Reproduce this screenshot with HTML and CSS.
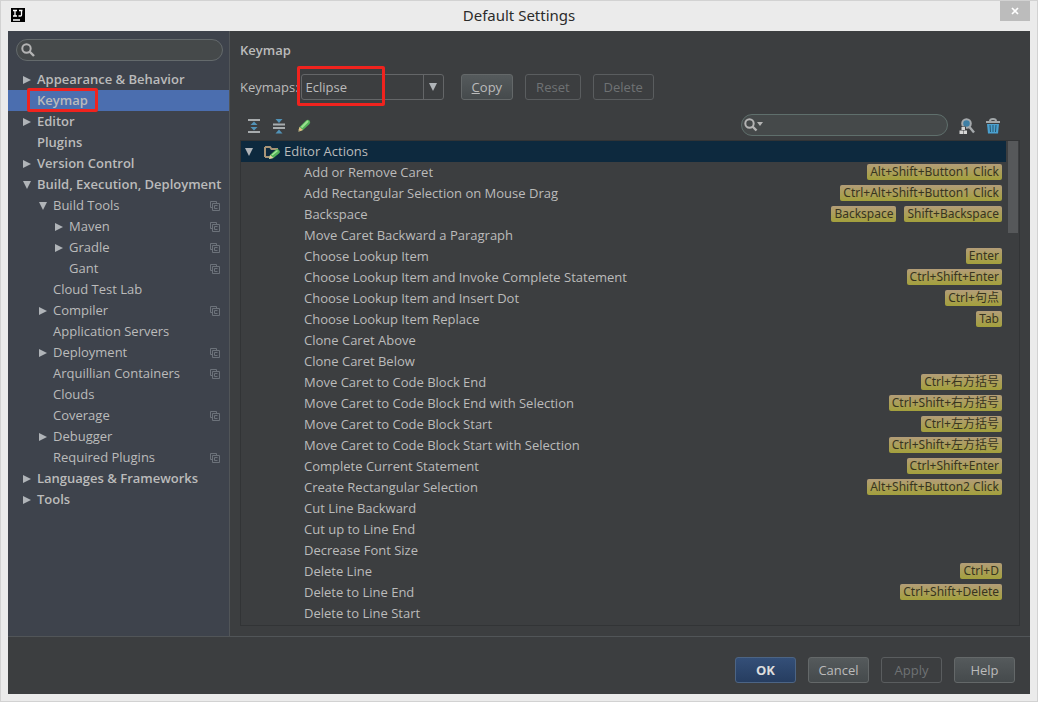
FILE: index.html
```html
<!DOCTYPE html>
<html lang="en">
<head>
  <meta charset="utf-8">
  <title>Default Settings</title>
  <link rel="stylesheet" href="styles.css">
</head>
<body>
  <svg class="symbols" aria-hidden="true">
    <symbol id="right" viewBox="0 0 10 10"><path d="M1 1l8 4-8 4z" fill="#b0b4b8"/></symbol>
    <symbol id="down" viewBox="0 0 10 10"><path d="M1 1h8L5 9z" fill="#b0b4b8"/></symbol>
    <symbol id="lens" viewBox="0 0 14 14"><circle cx="5.5" cy="5.5" r="4.2" fill="none" stroke="#b4b4b4" stroke-width="2"/><path d="M8.5 8.5l4.5 4.5" stroke="#b4b4b4" stroke-width="2.4"/></symbol>
    <symbol id="copy" viewBox="0 0 10 10"><path d="M2.5 6.500H.5v-6h6v2M2.500 2.500h7v7h-7zM4.500 4.500h3M4.500 4.500v3h3" fill="none" stroke="#6c727a"/></symbol>
  </svg>

  <header class="titlebar">
    <svg class="logo" width="14" height="14" viewBox="0 0 14 14"><path d="M0 0h14v14H0z"/><path d="M2 2.500h4M4 2.500v5.500M2 8h4M8 2.500h3.500M10.500 2.500v4.500q0 1-1 1H7.500M2 12h7" fill="none" stroke="#fff" stroke-width="1.300"/></svg>
    <h1>Default Settings</h1>
    <button class="close" aria-label="Close"><svg width="8" height="8" viewBox="0 0 8 8"><path d="M1 1l6 6M7 1L1 7" stroke="#fff" stroke-width="1.700"/></svg></button>
  </header>

  <div class="dialog">
    <nav class="sidebar">
      <label class="search">
        <svg width="14" height="14"><use href="#lens"/></svg>
        <input type="text" aria-label="Search settings">
      </label>
      <ul class="tree">
        <li><a class="group" href="#"><svg class="arrow"><use href="#right"/></svg>Appearance &amp; Behavior</a></li>
        <li><a class="group selected" href="#"><span class="arrow"></span><span class="name">Keymap<span class="mark"></span></span></a></li>
        <li><a class="group" href="#"><svg class="arrow"><use href="#right"/></svg>Editor</a></li>
        <li><a class="group" href="#"><span class="arrow"></span>Plugins</a></li>
        <li><a class="group" href="#"><svg class="arrow"><use href="#right"/></svg>Version Control</a></li>
        <li><a class="group" href="#"><svg class="arrow"><use href="#down"/></svg>Build, Execution, Deployment</a>
          <ul>
            <li><a href="#"><svg class="arrow"><use href="#down"/></svg>Build Tools<svg class="copy"><use href="#copy"/></svg></a>
              <ul>
                <li><a href="#"><svg class="arrow"><use href="#right"/></svg>Maven<svg class="copy"><use href="#copy"/></svg></a></li>
                <li><a href="#"><svg class="arrow"><use href="#right"/></svg>Gradle<svg class="copy"><use href="#copy"/></svg></a></li>
                <li><a href="#"><span class="arrow"></span>Gant<svg class="copy"><use href="#copy"/></svg></a></li>
              </ul>
            </li>
            <li><a href="#"><span class="arrow"></span>Cloud Test Lab</a></li>
            <li><a href="#"><svg class="arrow"><use href="#right"/></svg>Compiler<svg class="copy"><use href="#copy"/></svg></a></li>
            <li><a href="#"><span class="arrow"></span>Application Servers</a></li>
            <li><a href="#"><svg class="arrow"><use href="#right"/></svg>Deployment<svg class="copy"><use href="#copy"/></svg></a></li>
            <li><a href="#"><span class="arrow"></span>Arquillian Containers<svg class="copy"><use href="#copy"/></svg></a></li>
            <li><a href="#"><span class="arrow"></span>Clouds</a></li>
            <li><a href="#"><span class="arrow"></span>Coverage<svg class="copy"><use href="#copy"/></svg></a></li>
            <li><a href="#"><svg class="arrow"><use href="#right"/></svg>Debugger</a></li>
            <li><a href="#"><span class="arrow"></span>Required Plugins<svg class="copy"><use href="#copy"/></svg></a></li>
          </ul>
        </li>
        <li><a class="group" href="#"><svg class="arrow"><use href="#right"/></svg>Languages &amp; Frameworks</a></li>
        <li><a class="group" href="#"><svg class="arrow"><use href="#right"/></svg>Tools</a></li>
      </ul>
    </nav>

    <main class="content">
      <h2>Keymap</h2>
      <div class="keymaps">
        <label for="keymap">Keymaps:</label>
        <div class="combo">
          <select id="keymap"><option>Eclipse</option></select>
          <span class="drop"><svg width="10" height="10"><use href="#down"/></svg></span>
          <span class="mark"></span>
        </div>
        <button><u>C</u>opy</button>
        <button disabled>Reset</button>
        <button disabled>Delete</button>
      </div>

      <div class="toolbar">
        <button class="tool" aria-label="Expand all"><svg width="14" height="16" viewBox="0 0 14 16"><path d="M1 2h12M1 14h12" stroke="#a8acae" stroke-width="2"/><path d="M3.500 7L7 3.500 10.500 7zM3.500 9L7 12.500 10.500 9z" fill="#5293b8"/></svg></button>
        <button class="tool" aria-label="Collapse all"><svg width="14" height="16" viewBox="0 0 14 16"><path d="M1 6.500h12M1 10h12" stroke="#a8acae" stroke-width="1.800"/><path d="M3.500 1L7 5l3.500-4zM3.500 15.500L7 11.500l3.500 4z" fill="#5293b8"/></svg></button>
        <button class="tool" aria-label="Edit shortcut"><svg width="14" height="16" viewBox="0 0 14 16"><path d="M1 14l1.500-5L9 2.500q2-1.500 3.500 0t0 3.500L6 12z" fill="#54b259"/><path d="M4.500 9.500L11 3" stroke="#9be28f" stroke-width="2"/><path d="M1 14l1.500-5L6 12z" fill="#e3bd87"/><path d="M1 14l.5-2L3 13.300z" fill="#555"/></svg></button>
        <label class="search find">
          <svg width="20" height="14" viewBox="0 0 20 14"><circle cx="5.500" cy="5.500" r="4.200" fill="none" stroke="#b4b4b4" stroke-width="2"/><path d="M8.500 8.500l4 4" stroke="#b4b4b4" stroke-width="2.400"/><path d="M13 4h6l-3 4z" fill="#b4b4b4"/></svg>
          <input type="text" aria-label="Search actions">
        </label>
        <button class="tool" aria-label="Find by shortcut"><svg width="16" height="16" viewBox="0 0 16 16"><circle cx="7.500" cy="5.500" r="4.300" fill="#3e7fa5" stroke="#a5a9ac" stroke-width="2"/><path d="M10.500 9l4.500 5.500" stroke="#a5a9ac" stroke-width="2.400"/><path d="M2 8.500h5v3h2V16H0v-4.500h2z" fill="#3c3e40"/><path d="M2.500 9H6v3H2.500zM.5 12.500H4V16H.5zM4.500 12.500H8V16H4.500z" fill="#d6d6d6"/></svg></button>
        <button class="tool" aria-label="Clear filter"><svg width="16" height="16" viewBox="0 0 16 16"><path d="M1 4h14M5 3q0-2 3-2t3 2" fill="none" stroke="#a3a8aa" stroke-width="2"/><path d="M2 6h12l-1 9.500H3z" fill="#4aa0cf"/><path d="M5 7l.5 7M8 7v7M11 7l-.5 7" stroke="#27566f"/></svg></button>
      </div>

      <div class="actions">
        <table>
          <thead>
            <tr><th colspan="2"><span class="folder"><svg class="arrow"><use href="#down"/></svg><svg width="16" height="14" viewBox="0 0 16 14"><path d="M1 2v10M1 2h5l1.500 2H13v2M1 12h5" fill="none" stroke="#a89478" stroke-width="2"/><path d="M5 14l1-4 6-5.500q1.500-1 3 .5t.5 3L9.500 13z" fill="#54b259"/><path d="M8 10l5.500-4.500" stroke="#a4e69a" stroke-width="1.600"/><path d="M5 14l1-4 3.500 3z" fill="#e6cfa4"/></svg>Editor Actions</span></th></tr>
          </thead>
          <tbody>
            <tr><td>Add or Remove Caret</td><td><kbd>Alt+Shift+Button1 Click</kbd></td></tr>
            <tr><td>Add Rectangular Selection on Mouse Drag</td><td><kbd>Ctrl+Alt+Shift+Button1 Click</kbd></td></tr>
            <tr><td>Backspace</td><td><kbd>Backspace</kbd><kbd>Shift+Backspace</kbd></td></tr>
            <tr><td>Move Caret Backward a Paragraph</td><td></td></tr>
            <tr><td>Choose Lookup Item</td><td><kbd>Enter</kbd></td></tr>
            <tr><td>Choose Lookup Item and Invoke Complete Statement</td><td><kbd>Ctrl+Shift+Enter</kbd></td></tr>
            <tr><td>Choose Lookup Item and Insert Dot</td><td><kbd>Ctrl+句点</kbd></td></tr>
            <tr><td>Choose Lookup Item Replace</td><td><kbd>Tab</kbd></td></tr>
            <tr><td>Clone Caret Above</td><td></td></tr>
            <tr><td>Clone Caret Below</td><td></td></tr>
            <tr><td>Move Caret to Code Block End</td><td><kbd>Ctrl+右方括号</kbd></td></tr>
            <tr><td>Move Caret to Code Block End with Selection</td><td><kbd>Ctrl+Shift+右方括号</kbd></td></tr>
            <tr><td>Move Caret to Code Block Start</td><td><kbd>Ctrl+左方括号</kbd></td></tr>
            <tr><td>Move Caret to Code Block Start with Selection</td><td><kbd>Ctrl+Shift+左方括号</kbd></td></tr>
            <tr><td>Complete Current Statement</td><td><kbd>Ctrl+Shift+Enter</kbd></td></tr>
            <tr><td>Create Rectangular Selection</td><td><kbd>Alt+Shift+Button2 Click</kbd></td></tr>
            <tr><td>Cut Line Backward</td><td></td></tr>
            <tr><td>Cut up to Line End</td><td></td></tr>
            <tr><td>Decrease Font Size</td><td></td></tr>
            <tr><td>Delete Line</td><td><kbd>Ctrl+D</kbd></td></tr>
            <tr><td>Delete to Line End</td><td><kbd>Ctrl+Shift+Delete</kbd></td></tr>
            <tr><td>Delete to Line Start</td><td></td></tr>
          </tbody>
        </table>
        <div class="scrollbar"><div class="thumb"></div></div>
      </div>
    </main>
  </div>

  <footer class="buttons">
    <button class="default">OK</button>
    <button>Cancel</button>
    <button disabled>Apply</button>
    <button>Help</button>
  </footer>
</body>
</html>
```

FILE: styles.css
```css
* {
  box-sizing: border-box;
}

body {
  display: flex;
  flex-direction: column;
  min-height: 100vh;
  margin: 0;
  padding: 1px 8px 8px;
  background: #ebebeb;
  box-shadow: inset 0 0 0 1px #d2d2d2;
  color: #bbbbbb;
  font: 13px/21px "Open Sans", "Noto Sans CJK SC", sans-serif;
}

.symbols {
  display: none;
}

svg {
  display: block;
  flex: none;
}

ul {
  margin: 0;
  padding: 0;
  list-style: none;
}

button,
input,
select {
  font: inherit;
  color: inherit;
}

/* title bar */
.titlebar {
  display: grid;
  grid-template-columns: 1fr auto 1fr;
  align-items: center;
  height: 30px;
  padding-bottom: 2px;
}

.logo {
  margin-left: 3px;
}

.titlebar h1 {
  margin: 0;
  color: #2b2b2b;
  font-family: "Noto Sans", sans-serif;
  font-size: 15px;
  font-weight: normal;
}

.close {
  display: flex;
  align-items: center;
  justify-content: center;
  align-self: start;
  justify-self: end;
  width: 30px;
  height: 20px;
  padding: 0;
  border: 0;
  background: #bcbcbc;
}

.dialog {
  display: flex;
  flex: 1;
  background: #3c3e40;
}

/* settings tree */
.sidebar {
  width: 222px;
  flex: none;
  padding-top: 8px;
  border-right: 1px solid #515558;
  background: #3e434c;
}

.search {
  display: flex;
  align-items: center;
  height: 22px;
  margin: 0 6px 8px 8px;
  padding: 0 4px;
  border: 1px solid #646a6c;
  border-radius: 11px;
  background: #45494a;
}

.search input {
  flex: 1;
  min-width: 0;
  padding: 0 4px;
  border: 0;
  outline: 0;
  background: none;
}

.tree a {
  display: flex;
  align-items: center;
  height: 21px;
  padding: 0 9px 0 14px;
  color: inherit;
  text-decoration: none;
  white-space: nowrap;
}

.tree ul a {
  padding-left: 30px;
}

.tree ul ul a {
  padding-left: 46px;
}

.tree .group {
  font-weight: 600;
}

.tree .selected {
  background: #4b6eaf;
}

.arrow {
  flex: none;
  width: 10px;
  height: 10px;
  margin-right: 5px;
}

.copy {
  width: 10px;
  height: 10px;
  margin-left: auto;
}

.name,
.combo {
  position: relative;
}

.mark {
  position: absolute;
  border: 3px solid #f0231e;
  border-radius: 2px;
  pointer-events: none;
}

.name .mark {
  inset: -2px -10px -1px;
}

.combo .mark {
  inset: -9px 58px -7px -5px;
}

/* keymap page */
.content {
  display: flex;
  flex-direction: column;
  flex: 1;
  min-width: 0;
  padding: 9px 10px 10px;
}

.content h2 {
  margin: 0 0 13px;
  font-size: 13px;
  font-weight: 600;
  line-height: 21px;
}

.keymaps {
  display: flex;
  align-items: center;
}

.combo {
  display: flex;
  width: 143px;
  height: 26px;
  margin: 0 17px 0 2px;
  border: 1px solid #646668;
  border-radius: 3px;
}

.combo select {
  flex: 1;
  padding: 0 4px;
  border: 0;
  outline: 0;
  appearance: none;
  background: none;
}

.drop {
  display: flex;
  align-items: center;
  justify-content: center;
  width: 20px;
  border-left: 1px solid #646668;
}

.keymaps button,
.buttons button {
  height: 26px;
  padding: 0 10px;
  border: 1px solid #646869;
  border-radius: 3px;
  background: linear-gradient(#555a5c, #454a4c);
}

.keymaps button + button {
  margin-left: 12px;
}

.keymaps button:disabled,
.buttons button:disabled {
  border-color: #5a5d5f;
  background: none;
  color: #6f7274;
}

.toolbar {
  display: flex;
  align-items: center;
  gap: 11px;
  margin: 14px 0 4px;
  padding: 0 19px 0 7px;
}

.tool {
  padding: 2px 0 0;
  border: 0;
  background: none;
}

.find {
  width: 207px;
  margin: 0 0 0 auto;
  padding: 0 2px;
  border-color: #5f6f6c;
}

.find + .tool {
  margin-right: -1px;
}

.actions {
  display: flex;
  flex: 1;
  border: 1px solid #323436;
}

table {
  flex: 1;
  align-self: flex-start;
  border-collapse: collapse;
}

th {
  padding: 0 0 0 3px;
  background: #0d293e;
  font-weight: normal;
  text-align: left;
}

.folder {
  display: flex;
  align-items: center;
  gap: 4px;
}

.folder .arrow {
  margin-right: 6px;
}

td {
  height: 21px;
  padding: 0 4px 0 63px;
  white-space: nowrap;
}

td + td {
  padding-left: 0;
  text-align: right;
}

kbd {
  display: inline-block;
  margin: 2px 0 0 8px;
  padding: 0 3px;
  border-radius: 2px;
  background: linear-gradient(#b39d78, #a3a03c);
  color: #38351f;
  font: 12px/16px "Noto Sans", "Noto Sans CJK SC", sans-serif;
  vertical-align: top;
}

.scrollbar {
  width: 13px;
  padding: 0 1px 0 2px;
}

.thumb {
  height: 92px;
  background: #56585a;
}

/* dialog buttons */
.buttons {
  display: flex;
  justify-content: flex-end;
  gap: 12px;
  padding: 20px 15px 11px;
  border-top: 1px solid #515558;
  background: #3c3e40;
}

.buttons button {
  width: 61px;
  padding: 0;
}

.buttons .default {
  border-color: #4c6484;
  background: linear-gradient(#344f78, #263d60);
  color: #dddddd;
  font-weight: bold;
}
```
